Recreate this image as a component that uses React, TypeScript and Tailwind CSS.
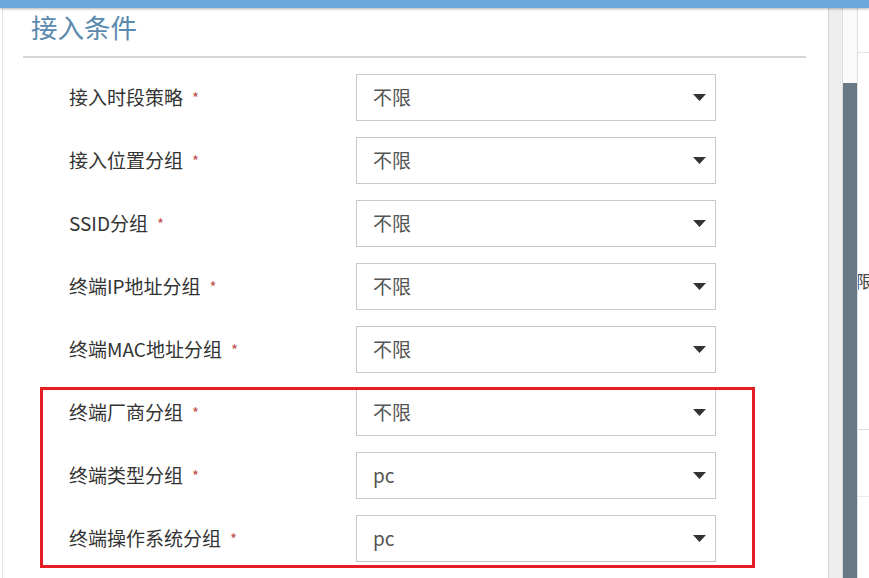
import React from "react";

const rows: { label: string; value: string }[] = [
  { label: "接入时段策略", value: "不限" },
  { label: "接入位置分组", value: "不限" },
  { label: "SSID分组", value: "不限" },
  { label: "终端IP地址分组", value: "不限" },
  { label: "终端MAC地址分组", value: "不限" },
  { label: "终端厂商分组", value: "不限" },
  { label: "终端类型分组", value: "pc" },
  { label: "终端操作系统分组", value: "pc" },
];

function Caret() {
  return (
    <svg width="13" height="7" viewBox="0 0 13 7">
      <path d="M0 0 L13 0 L6.5 7 Z" fill="#333" />
    </svg>
  );
}

export default function App() {
  return (
    <div
      className="relative w-[869px] h-[578px] overflow-hidden bg-white flex flex-col"
      style={{ fontFamily: '"Noto Sans CJK SC", "Noto Sans", sans-serif' }}
    >
      <div className="relative z-10 h-[8px] bg-[#6ca8db] shadow-[0_1px_3px_rgba(0,0,0,0.3)]" />
      <div className="flex flex-1 min-h-0">
        {/* main panel */}
        <div className="w-[828px] flex">
          <div className="w-[2px]" />
          <div className="w-[1px] bg-[#e6e6e6]" />
          <div className="flex-1 flex flex-col">
            <div className="pl-[28px] pt-[1px] h-[48px] text-[26.5px] leading-[36px] text-[#5a89ae]">
              接入条件
            </div>
            <div className="ml-[20px] w-[783px] h-[2px] bg-[#d6d6d6]" />
            <div className="flex flex-col gap-[16px] pt-[16px]">
              {rows.map((r) => (
                <div key={r.label} className="flex items-center h-[47px]">
                  <div className="ml-[66px] w-[287px] flex items-center text-[19px] text-[#333]">
                    <span>{r.label}</span>
                    <span className="ml-[9px] text-[15px] text-[#c0504d] leading-none">*</span>
                  </div>
                  <div className="w-[360px] h-[47px] border border-[#c8c8c8] flex items-center justify-between pl-[16px] pr-[9px] text-[19px] text-[#555]">
                    <span>{r.value}</span>
                    <Caret />
                  </div>
                </div>
              ))}
            </div>
          </div>
        </div>
        {/* right side */}
        <div className="w-[1px] bg-[#d2d2d2]" />
        <div className="w-[13px] bg-[#eeeeee]" />
        <div className="w-[15px] flex flex-col border-l border-[#dcdcdc]">
          <div className="h-[75px] bg-[#fafafa]" />
          <div className="flex-1 bg-[#677985]" />
        </div>
        <div className="flex-1 flex flex-col border-l border-[#dcdcdc] overflow-hidden">
          <div className="h-[44px]" />
          <div className="h-[1px] bg-[#e2e2e2]" />
          <div className="h-[216px]" />
          <div className="text-[17px] leading-[24px] text-[#444] -ml-[2px]">限</div>
          <div className="h-[136px]" />
          <div className="h-[1px] bg-[#dedede]" />
          <div className="h-[66px]" />
          <div className="h-[1px] bg-[#ececec]" />
        </div>
      </div>
      {/* red annotation box */}
      <div className="absolute left-[40px] top-[387px] w-[715px] h-[181px] border-[3px] border-[#e31e24]" />
    </div>
  );
}
